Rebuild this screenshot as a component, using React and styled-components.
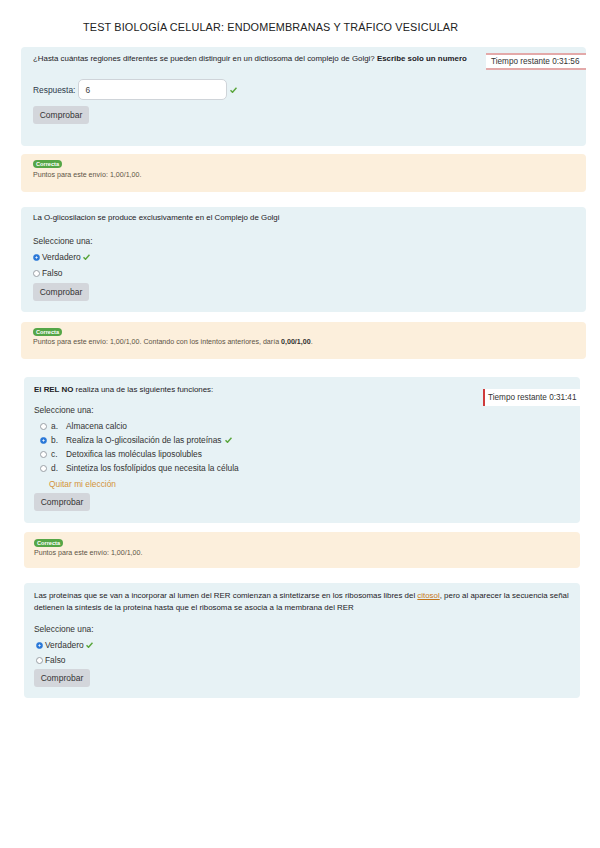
import styled, { createGlobalStyle } from "styled-components";

const Global = createGlobalStyle`
  html, body { margin: 0; padding: 0; background: #ffffff; }
  body { font-family: "Liberation Sans", Arial, sans-serif; color: #1d2125; }
`;

const Page = styled.div`
  width: 600px;
  height: 848px;
  display: flex;
  flex-direction: column;
`;

const Title = styled.h1`
  margin: 0;
  padding: 21px 0 0 83px;
  height: 26px;
  font-size: 10.85px;
  font-weight: normal;
  letter-spacing: 0.15px;
  color: #222;
`;

const Group = styled.div`
  display: flex;
  flex-direction: column;
  margin-left: ${(p) => p.left}px;
  width: ${(p) => p.width}px;
  margin-top: ${(p) => p.top || 0}px;
`;

const Card = styled.div`
  position: relative;
  background: #e7f2f5;
  border-radius: 4px;
  padding: ${(p) => p.pad};
  height: ${(p) => p.h}px;
  box-sizing: border-box;
  margin-top: ${(p) => p.top || 0}px;
  font-size: 8.4px;
`;

const Feedback = styled.div`
  background: #fcefdc;
  border-radius: 4px;
  height: ${(p) => p.h}px;
  box-sizing: border-box;
  padding: ${(p) => p.pad};
  margin-top: ${(p) => p.top || 0}px;
  font-size: 7.1px;
  color: #5d5446;
`;

const Badge = styled.span`
  display: inline-block;
  background: #55a647;
  color: #fff;
  font-weight: bold;
  font-size: 5.6px;
  line-height: 8px;
  padding: 0 3px;
  border-radius: 4px;
`;

const FeedText = styled.div`
  margin-top: ${(p) => p.top || 3}px;
  line-height: 9px;
  b { color: #333; }
`;

const Timer = styled.div`
  position: absolute;
  right: 0;
  top: ${(p) => p.top}px;
  width: ${(p) => p.w}px;
  height: 17px;
  box-sizing: border-box;
  background: #fff;
  overflow: hidden;
  white-space: nowrap;
  font-size: 8.2px;
  color: #333;
  padding-left: ${(p) => p.padLeft}px;
  border-top: ${(p) => (p.variant === "lines" ? "2px solid #e3a9a9" : "none")};
  border-bottom: ${(p) => (p.variant === "lines" ? "2px solid #e3a9a9" : "none")};
  border-left: ${(p) => (p.variant === "side" ? "2px solid #cf3b3b" : "none")};
  line-height: ${(p) => (p.variant === "lines" ? "13px" : "17px")};
`;

const Question = styled.div`
  font-size: 7.9px;
  line-height: ${(p) => p.lh || 10}px;
  white-space: ${(p) => (p.nowrap ? "nowrap" : "normal")};
  color: #1d2125;
  b { font-weight: bold; }
  a { color: #c4761b; text-decoration: underline; }
`;

const Row = styled.div`
  display: flex;
  align-items: center;
  gap: ${(p) => p.gap || 4}px;
  margin-top: ${(p) => p.top || 0}px;
  margin-left: ${(p) => p.left || 0}px;
  line-height: 10px;
  color: #333;
`;

const Label = styled.span`
  color: #2d3a4a;
`;

const Input = styled.div`
  width: 149px;
  height: 21px;
  box-sizing: border-box;
  background: #fff;
  border: 1px solid #cfd4d9;
  border-radius: 5px;
  padding-left: 6px;
  display: flex;
  align-items: center;
  color: #444;
`;

const Button = styled.div`
  width: ${(p) => p.w || 56}px;
  height: 18px;
  margin-top: ${(p) => p.top || 0}px;
  background: #d3d6db;
  border-radius: 3px;
  display: flex;
  align-items: center;
  justify-content: center;
  color: #333;
  font-size: 8.5px;
`;

const Prompt = styled.div`
  margin-top: ${(p) => p.top}px;
  line-height: 10px;
  color: #333;
`;

const Radio = styled.span`
  width: 7px;
  height: 7px;
  border-radius: 50%;
  box-sizing: border-box;
  border: 1px solid ${(p) => (p.checked ? "#2a78d8" : "#9aa0a6")};
  background: ${(p) => (p.checked ? "radial-gradient(circle, #e8f0fb 0 0.8px, #2a78d8 1.3px)" : "#fff")};
  flex: none;
`;

const Letter = styled.span`
  width: 11px;
  color: #333;
`;

const Check = () => (
  <svg width="7" height="6" viewBox="0 0 14 12">
    <path d="M1 6.5 L5 10.5 L13 1.5" fill="none" stroke="#5aa63c" strokeWidth="3" />
  </svg>
);

const Clear = styled.div`
  margin: 6px 0 0 15px;
  color: #d3923a;
  line-height: 10px;
`;

const options = [
  { l: "a.", t: "Almacena calcio" },
  { l: "b.", t: "Realiza la O-glicosilación de las proteínas", checked: true },
  { l: "c.", t: "Detoxifica las moléculas liposolubles" },
  { l: "d.", t: "Sintetiza los fosfolípidos que necesita la célula" },
];

export default function App() {
  return (
    <Page>
      <Global />
      <Title>TEST BIOLOGÍA CELULAR: ENDOMEMBRANAS Y TRÁFICO VESICULAR</Title>

      <Group left={21} width={565}>
        <Card h={99} pad="7px 12px 0 12px">
          <Question>
            ¿Hasta cuántas regiones diferentes se pueden distinguir en un dictiosoma del complejo de Golgi? <b>Escribe solo un numero</b>
          </Question>
          <Timer variant="lines" top={6} w={100} padLeft={5}>Tiempo restante 0:31:56</Timer>
          <Row top={15} gap={3}>
            <Label>Respuesta:</Label>
            <Input>6</Input>
            <Check />
          </Row>
          <Button top={6}>Comprobar</Button>
        </Card>

        <Feedback top={8} h={38} pad="6px 12px 0 12px">
          <Badge>Correcta</Badge>
          <FeedText>Puntos para este envío: 1,00/1,00.</FeedText>
        </Feedback>

        <Card top={15} h={105} pad="6px 12px 0 12px">
          <Question>La O-glicosilacion se produce exclusivamente en el Complejo de Golgi</Question>
          <Prompt top={13}>Seleccione una:</Prompt>
          <Row top={6} gap={2}>
            <Radio checked />
            <span>Verdadero</span>
            <Check />
          </Row>
          <Row top={6} gap={2}>
            <Radio />
            <span>Falso</span>
          </Row>
          <Button top={5}>Comprobar</Button>
        </Card>

        <Feedback top={10} h={37} pad="6px 12px 0 12px">
          <Badge>Correcta</Badge>
          <FeedText top={2}>
            Puntos para este envío: 1,00/1,00. Contando con los intentos anteriores, daría <b>0,00/1,00</b>.
          </FeedText>
        </Feedback>
      </Group>

      <Group left={24} width={556} top={18}>
        <Card h={146} pad="8px 10px 0 10px">
          <Question>
            <b>El REL NO</b> realiza una de las siguientes funciones:
          </Question>
          <Timer variant="side" top={12} w={97} padLeft={3}>Tiempo restante 0:31:41</Timer>
          <Prompt top={10}>Seleccione una:</Prompt>
          {options.map((o) => (
            <Row key={o.l} top={o.l === "a." ? 6 : 4} left={6} gap={4}>
              <Radio checked={o.checked} />
              <Letter>{o.l}</Letter>
              <span>{o.t}</span>
              {o.checked && <Check />}
            </Row>
          ))}
          <Clear>Quitar mi elección</Clear>
          <Button top={4}>Comprobar</Button>
        </Card>

        <Feedback top={9} h={36} pad="7px 10px 0 10px">
          <Badge>Correcta</Badge>
          <FeedText top={2}>Puntos para este envío: 1,00/1,00.</FeedText>
        </Feedback>

        <Card top={15} h={115} pad="7px 10px 0 10px">
          <Question lh={12} nowrap>
            Las proteínas que se van a incorporar al lumen del RER comienzan a sintetizarse en los ribosomas libres del <a>citosol</a>, pero al aparecer la secuencia señal
            <br />
            detienen la síntesis de la proteína hasta que el ribosoma se asocia a la membrana del RER
          </Question>
          <Prompt top={10}>Seleccione una:</Prompt>
          <Row top={6} left={2} gap={2}>
            <Radio checked />
            <span>Verdadero</span>
            <Check />
          </Row>
          <Row top={5} left={2} gap={2}>
            <Radio />
            <span>Falso</span>
          </Row>
          <Button top={4}>Comprobar</Button>
        </Card>
      </Group>
    </Page>
  );
}
